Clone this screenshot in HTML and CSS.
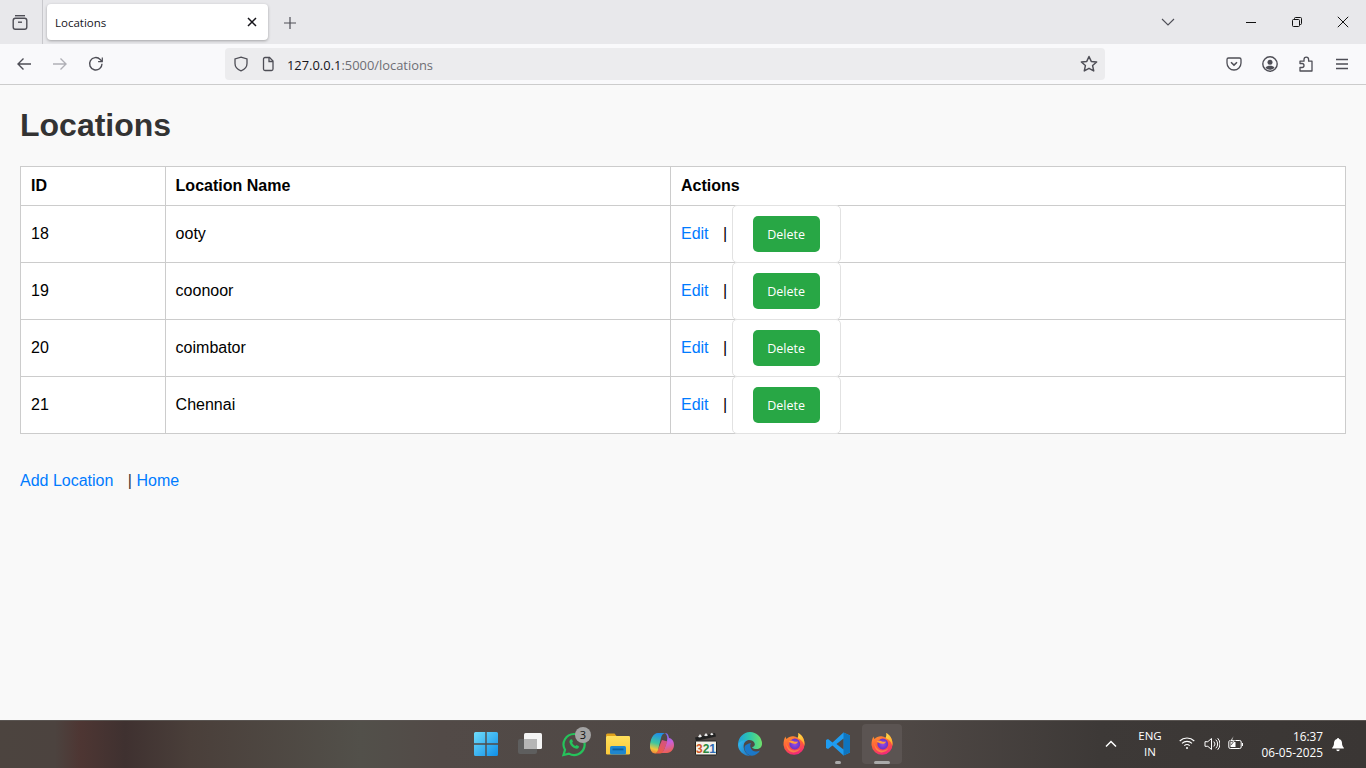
FILE: index.html
```html
<!DOCTYPE html>
<html lang="en">
<head>
<meta charset="utf-8">
<title>Locations</title>
<link rel="stylesheet" href="styles.css">
</head>
<body>
<svg class="defs" width="0" height="0" aria-hidden="true">
  <defs>
    <linearGradient id="winBlue" x1="0" y1="0" x2="1" y2="1"><stop offset="0" stop-color="#6fdcfb"/><stop offset="1" stop-color="#0f8fe8"/></linearGradient>
    <linearGradient id="ffBody" x1="0.3" y1="0" x2="0.6" y2="1"><stop offset="0" stop-color="#ff9a2e"/><stop offset="0.55" stop-color="#ff5a3a"/><stop offset="1" stop-color="#f0267e"/></linearGradient>
    <linearGradient id="ffTail" x1="0" y1="0" x2="0.6" y2="1"><stop offset="0" stop-color="#ffe14a"/><stop offset="1" stop-color="#ffa92e"/></linearGradient>
    <radialGradient id="ffCore" cx="0.5" cy="0.5" r="0.6"><stop offset="0" stop-color="#9b4be8"/><stop offset="1" stop-color="#5a2fc0"/></radialGradient>
    <linearGradient id="edgeA" x1="0" y1="0" x2="1" y2="1"><stop offset="0" stop-color="#35c1f1"/><stop offset="1" stop-color="#1c6fc0"/></linearGradient>
    <linearGradient id="edgeB" x1="0" y1="0.3" x2="1" y2="0.3"><stop offset="0" stop-color="#1f9fe0"/><stop offset="0.5" stop-color="#2fc9a8"/><stop offset="1" stop-color="#6fe06a"/></linearGradient>
    <linearGradient id="copA" x1="0.5" y1="0" x2="0.3" y2="1"><stop offset="0" stop-color="#1f8fe8"/><stop offset="0.5" stop-color="#3fc6a0"/><stop offset="0.8" stop-color="#f2c63a"/><stop offset="1" stop-color="#f0823a"/></linearGradient>
    <linearGradient id="copB" x1="0.4" y1="0" x2="0.6" y2="1"><stop offset="0" stop-color="#6f6ff0"/><stop offset="0.5" stop-color="#c95fd8"/><stop offset="1" stop-color="#f0604a"/></linearGradient>
    <linearGradient id="copC" x1="0.8" y1="0" x2="0.2" y2="1"><stop offset="0" stop-color="#d0508a"/><stop offset="1" stop-color="#f2603a"/></linearGradient>
    <linearGradient id="folder" x1="0" y1="0" x2="0" y2="1"><stop offset="0" stop-color="#ffe05c"/><stop offset="1" stop-color="#fbc93a"/></linearGradient>
    <symbol id="firefox" viewBox="0 0 24 24">
      <path d="M3.400 4.600c.3 1.100.6 1.900 1.200 2.500C6.500 5 9 4 11.500 4.300c1.500.2 3 .7 4 1.700 1.300-2.200 1.100-3.500.7-5 3.300 1.800 6.300 5.500 6.300 10.500a10.500 10.500 0 0 1-21 1.500C1.500 9.800 2 7 3.400 4.600z" fill="url(#ffBody)"/>
      <path d="M16.200 1c3.300 1.800 6.300 5.500 6.300 10.500 0 1-.1 1.800-.3 2.600-.4-3.400-2.400-6.400-6.700-8.100 1.300-2.200 1.100-3.500.7-5z" fill="url(#ffTail)"/>
      <circle cx="12.800" cy="12" r="5.400" fill="url(#ffCore)"/>
      <path d="M6.500 9.200c2-1 3.700-.8 5 0 1.500.9 3 .8 4.500.2-.5 1.600-1.900 2.600-3.600 2.400-2.400-.2-4.300-1-5.900-2.600z" fill="#ff9e3c"/>
      <path d="M4.500 11c.5 4 3.500 7 7.500 7.400 2.500.2 4.800-.6 6.500-2.400-1.500 3-4.300 4.600-7.300 4.400C7 20 4 16 4.500 11z" fill="#ffb03c" opacity=".55"/>
    </symbol>
  </defs>
</svg>

<header class="browser">
  <div class="tabstrip">
    <div class="tabs-toggle">
      <svg class="ico20" viewBox="0 0 20 20" fill="none" stroke="#4e4e56" stroke-width="1.400"><path d="M5 3.700h10"/><rect x="3.200" y="6.200" width="13.600" height="11" rx="2.200"/><path d="M8 10.200h4"/></svg>
    </div>
    <div class="tab">
      <span class="tab-title">Locations</span>
      <svg class="ico12" viewBox="0 0 12 12" fill="none" stroke="#15141a" stroke-width="1.500"><path d="M2 2l8 8M10 2l-8 8"/></svg>
    </div>
    <div class="newtab">
      <svg class="ico16" viewBox="0 0 16 16" fill="none" stroke="#4e4e56" stroke-width="1.200"><path d="M8 2v12M2 8h12"/></svg>
    </div>
    <div class="strip-right">
      <svg class="tablist" viewBox="0 0 14 10" fill="none" stroke="#4e4e56" stroke-width="1.100"><path d="M1 2l6 6 6-6"/></svg>
      <div class="winbtns">
        <svg class="ico12" viewBox="0 0 12 12" fill="none" stroke="#111" stroke-width="1"><path d="M1 6.500h10"/></svg>
        <svg class="ico12" viewBox="0 0 12 12" fill="none" stroke="#111" stroke-width="1"><rect x="1.500" y="3.500" width="7" height="7" rx="1"/><path d="M3.500 3.500V2.500a1 1 0 0 1 1-1h5a1 1 0 0 1 1 1v5a1 1 0 0 1-1 1h-1"/></svg>
        <svg class="ico12" viewBox="0 0 12 12" fill="none" stroke="#111" stroke-width="1"><path d="M.8.800l10.400 10.400M11.200.800L.8 11.200"/></svg>
      </div>
    </div>
  </div>
  <nav class="navbar">
    <div class="nav-left">
      <svg class="ico16" viewBox="0 0 16 16" fill="none" stroke="#4e4e56" stroke-width="1.400"><path d="M15 8H2M7.500 2.500L2 8l5.500 5.500"/></svg>
      <svg class="ico16" viewBox="0 0 16 16" fill="none" stroke="#b0b0b6" stroke-width="1.400"><path d="M1 8h13M8.500 2.500L14 8l-5.500 5.500"/></svg>
      <svg class="ico16" viewBox="0 0 16 16" fill="none" stroke="#4e4e56" stroke-width="1.400"><path d="M14 7.800A6.200 6.200 0 1 1 12.200 3.400L14 5.200"/><path d="M14.300 1.500v4.200h-4.200" stroke-width="1.200"/></svg>
    </div>
    <div class="urlbar">
      <svg class="ico16" viewBox="0 0 16 16" fill="none" stroke="#4e4e56" stroke-width="1.300"><path d="M8 1.200L14 3v4.500c0 3.500-2.500 6-6 7.300-3.500-1.300-6-3.800-6-7.300V3z"/></svg>
      <svg class="ico-page" viewBox="0 0 16 16" fill="none" stroke="#4e4e56" stroke-width="1.300"><path d="M3.500 3a1.500 1.500 0 0 1 1.500-1.500h4.500L13 5v8a1.500 1.500 0 0 1-1.500 1.500H5A1.500 1.500 0 0 1 3.500 13z"/><path d="M9 1.500V5.500h4"/></svg>
      <span class="url"><span class="url-host">127.0.0.1</span>:5000/locations</span>
      <svg class="ico-star" viewBox="0 0 16 16" fill="none" stroke="#4e4e56" stroke-width="1.300"><path d="M8 1.300l2 4.400 4.800.5-3.600 3.200 1 4.800L8 11.800l-4.200 2.400 1-4.800L1.200 6.200 6 5.700z" stroke-linejoin="round"/></svg>
    </div>
    <div class="nav-right">
      <svg class="ico16" viewBox="0 0 16 16" fill="none" stroke="#4e4e56" stroke-width="1.300"><path d="M2.500 2h11A1.500 1.500 0 0 1 15 3.500V7a7 7 0 0 1-14 0V3.500A1.500 1.500 0 0 1 2.500 2z"/><path d="M5 6.300l3 2.800 3-2.800" stroke-width="1.500"/></svg>
      <svg class="ico16" viewBox="0 0 16 16"><circle cx="8" cy="8" r="7.200" fill="none" stroke="#4e4e56" stroke-width="1.400"/><circle cx="8" cy="6.200" r="2.500" fill="#4e4e56"/><path d="M3.500 11.700c1-1.500 2.500-2 4.500-2s3.500.5 4.500 2c-1 1.300-2.600 2-4.500 2s-3.500-.7-4.500-2z" fill="#4e4e56"/></svg>
      <svg class="ico16" viewBox="0 0 16 16" fill="none" stroke="#4e4e56" stroke-width="1.300"><path d="M2 5.200H6V3.400a2.300 2.300 0 0 1 4.600 0V5.200H14V15H2V11.500H4a2 2 0 0 0 0-4H2z" stroke-linejoin="round"/></svg>
      <svg class="ico16" viewBox="0 0 16 16" fill="none" stroke="#4e4e56" stroke-width="1.300"><path d="M2 3.500h12M2 8h12M2 12.500h12"/></svg>
    </div>
  </nav>
</header>

<main class="page">
  <h1 class="title">Locations</h1>
  <table class="grid">
    <thead>
      <tr><th class="col-id">ID</th><th class="col-name">Location Name</th><th>Actions</th></tr>
    </thead>
    <tbody>
      <tr><td>18</td><td>ooty</td><td class="actions"><a class="link edit" href="#">Edit</a> | <form class="del"><button class="del-btn" type="button">Delete</button></form></td></tr>
      <tr><td>19</td><td>coonoor</td><td class="actions"><a class="link edit" href="#">Edit</a> | <form class="del"><button class="del-btn" type="button">Delete</button></form></td></tr>
      <tr><td>20</td><td>coimbator</td><td class="actions"><a class="link edit" href="#">Edit</a> | <form class="del"><button class="del-btn" type="button">Delete</button></form></td></tr>
      <tr><td>21</td><td>Chennai</td><td class="actions"><a class="link edit" href="#">Edit</a> | <form class="del"><button class="del-btn" type="button">Delete</button></form></td></tr>
    </tbody>
  </table>
  <p class="bottom-links"><a class="link edit" href="#">Add Location</a> | <a class="link" href="#">Home</a></p>
</main>

<footer class="taskbar">
  <div class="task-icons">
    <div class="task"><svg class="ico24" viewBox="0 0 24 24"><path d="M0 1.500A1.500 1.500 0 0 1 1.500 0h9.800v11.300H0zM12.700 0h9.800A1.500 1.500 0 0 1 24 1.500v9.800H12.700zM0 12.700h11.300V24H1.500A1.500 1.500 0 0 1 0 22.500zM12.700 12.700H24v9.800a1.500 1.500 0 0 1-1.500 1.500h-9.800z" fill="url(#winBlue)"/></svg></div>
    <div class="task"><svg class="ico24" viewBox="0 0 24 24"><rect x="0" y="7" width="19" height="15" rx="2" fill="#5e5e5e"/><rect x="6" y="1" width="18" height="16" rx="1.500" fill="#f4f4f4"/><rect x="6" y="7" width="13" height="10" fill="#b5b5b5"/></svg></div>
    <div class="task"><svg class="ico24-wa" viewBox="0 0 26 26"><path d="M13 3a10.500 10.500 0 0 0-9 15.800L2.500 24l5.400-1.400A10.500 10.500 0 1 0 13 3z" fill="none" stroke="#25c35b" stroke-width="2.200"/><path d="M9.500 8.500c-1 .8-1.300 2-.8 3.500 1 2.700 3.200 4.700 5.800 5.600 1.400.4 2.600 0 3.300-1.200l.2-1.200-2.500-1.300-1 1.200c-1.500-.6-2.700-1.800-3.400-3.300l.9-1-1-2.600z" fill="#25c35b"/></svg><span class="badge">3</span></div>
    <div class="task"><svg class="ico24" viewBox="0 0 24 24"><path d="M0 3a1.500 1.500 0 0 1 1.500-1.500h7L11 4.500h-11z" fill="#e0a21c"/><rect x="0" y="4" width="24" height="18.500" rx="1.200" fill="url(#folder)"/><rect x="4" y="14" width="16" height="8.500" rx="1.500" fill="#1f87cf"/><rect x="6.500" y="16.500" width="11" height="1.800" fill="#0d5f9f"/></svg></div>
    <div class="task"><svg class="ico24" viewBox="0 0 24 24"><path d="M15 1c2 0 3 1 3.500 3l.5 2c3 .5 5 3 5 7 0 4-3 8-7 8h-6c2-1 3-3 4-6l2-6c.7-3 .5-6-2-8z" fill="url(#copB)"/><path d="M12 8l5.500 1.500-3.500 8.500c-1 2-2 3.500-4 3.500H5c1.500-.5 2.500-2 3-4z" fill="url(#copC)"/><path d="M8 1h7c-2.200.6-3.400 2.500-4 5l-3 12c-.4 1.500-1.500 3.500-3 3.500-2.500 0-5-2.800-5-7C0 8 3 1 8 1z" fill="url(#copA)"/></svg></div>
    <div class="task"><svg class="ico24" viewBox="0 0 24 24"><path d="M1 5.500L21 1l1 3.500-20 4.500z" fill="#222"/><path d="M4 5l2-3 2 2.500-2 1zM10 3.500l2-2.500 2 2.500-2 .8zM16 2.200l2-1.500 1.500 2-2 .5z" fill="#eee"/><rect x="1.500" y="9" width="21" height="14" rx="1" fill="#f4f1e8" stroke="#222"/><text x="12" y="21" class="mpc-text"><tspan fill="#d2572a">3</tspan><tspan fill="#2b8a3e">2</tspan><tspan fill="#2f6bb5">1</tspan></text></svg></div>
    <div class="task"><svg class="ico24" viewBox="0 0 24 24"><path d="M12 0a12 12 0 0 1 12 12c0 3-2.500 5-5.500 5-2.500 0-4-.7-4.500-1.800 2-.5 3-1.700 2.800-3.200C16.300 9.500 14 8 11 8 6.500 8 2.500 10 0 13 0 5.500 5.500 0 12 0z" fill="url(#edgeB)"/><path d="M0 13c.5-3 5-5.500 10-5-4 1.500-5 5-4 9 .7 3 3 5.500 6.500 7C5.500 24 .2 19 0 13z" fill="url(#edgeA)"/><path d="M6.500 15c-.5 4 3 8.500 7.500 8.800 3.500-.4 6.500-2.500 8-5.300-4 2-8.500 1-9.500-3.200-.5-1.500-.2-3 .5-4.300-3 .6-6 2-6.500 4z" fill="#1c78c8"/></svg></div>
    <div class="task"><svg class="ico24" viewBox="0 0 24 24"><use href="#firefox"/></svg></div>
    <div class="task"><svg class="ico24" viewBox="0 0 24 24"><path d="M17.500.5L24 3.500v17l-6.500 3L6.500 13.500l-4.500 3.500L0 16V8l2-1 4.500 3.500z" fill="#1f9cf0"/><path d="M17.500.5L24 3.500v17l-6.500 3z" fill="#0e75bf"/><path d="M17.500 6.500L10.500 12l7 5.500z" fill="#4e4845"/></svg><span class="dot"></span></div>
    <div class="task task-active"><svg class="ico24" viewBox="0 0 24 24"><use href="#firefox"/></svg><span class="dot dot-wide"></span></div>
  </div>
  <div class="tray">
    <svg class="tray-chev" viewBox="0 0 12 8" fill="none" stroke="#fff" stroke-width="1.500"><path d="M1 6.500L6 1.500l5 5"/></svg>
    <div class="lang"><span>ENG</span><span>IN</span></div>
    <div class="tray-status">
      <svg class="ico16" viewBox="0 0 16 16" fill="none" stroke="#fff" stroke-width="1.100"><path d="M.7 5a10.500 10.500 0 0 1 14.600 0M3 7.400a7.200 7.200 0 0 1 10 0M5.300 9.700a4 4 0 0 1 5.400 0"/><circle cx="8" cy="12" r="1" fill="#fff" stroke="none"/></svg>
      <svg class="ico16" viewBox="0 0 16 16" fill="none" stroke="#fff" stroke-width="1"><path d="M1 5.700h2.800L7.500 2.500v11L3.800 10.300H1z" stroke-linejoin="round"/><path d="M9.800 5.500a3.500 3.500 0 0 1 0 5M11.800 3.700a6 6 0 0 1 0 8.600M13.700 2.200a8.500 8.500 0 0 1 0 11.600"/></svg>
      <svg class="ico16" viewBox="0 0 16 16" fill="none" stroke="#fff" stroke-width="1"><rect x=".8" y="4.500" width="12.400" height="8" rx="1.500"/><path d="M14.500 7v3"/><path d="M2.500 6h5v5h-5z" fill="#fff" stroke="none"/><path d="M5.500 0L1.800 5.500h3L3.200 9l4.300-5H4.500z" fill="#fff" stroke="#3c3836" stroke-width=".5"/></svg>
    </div>
    <div class="clock"><span>16:37</span><span>06-05-2025</span></div>
    <svg class="bell" viewBox="0 0 14 14" fill="#fff"><path d="M7 .5c.6 0 1 .4 1 .9 2 .5 3 2.200 3 4.100 0 2 .5 3.300 1.800 4.700.3.400.1.800-.4.800H1.600c-.5 0-.7-.4-.4-.8C2.500 8.800 3 7.500 3 5.500c0-1.900 1-3.600 3-4.100 0-.5.400-.9 1-.9z"/><path d="M5.300 12h3.400a1.700 1.700 0 0 1-3.400 0z"/></svg>
  </div>
</footer>
</body>
</html>
```

FILE: styles.css
```css
* { box-sizing: border-box; }
html, body { margin: 0; height: 100%; }
body {
  display: flex;
  flex-direction: column;
  height: 768px;
  overflow: hidden;
  background: #f9f9f9;
  font-family: "Liberation Sans", Arial, sans-serif;
  font-size: 16px;
}
svg { display: block; flex: none; }
.defs { position: absolute; }
.ico12 { width: 12px; height: 12px; }
.ico14 { width: 14px; height: 14px; }
.ico16 { width: 16px; height: 16px; }
.ico20 { width: 20px; height: 20px; }
.ico24 { width: 24px; height: 24px; }
.ico24-wa { width: 26px; height: 26px; }

/* browser chrome */
.browser { flex: none; font-family: "Open Sans", "Noto Sans", sans-serif; }
.tabstrip {
  height: 44px;
  display: flex;
  align-items: center;
  background: #e8e8eb;
}
.tabs-toggle {
  width: 43px;
  height: 44px;
  padding-left: 10px;
  display: flex;
  align-items: center;
  border-right: 1px solid #c8c8cc;
}
.tab {
  width: 221px;
  height: 36px;
  margin-left: 4px;
  padding: 0 10px 0 8px;
  display: flex;
  align-items: center;
  justify-content: space-between;
  background: #fff;
  border-radius: 4px;
  box-shadow: 0 1px 3px rgba(0, 0, 0, .3);
}
.tab-title { font-size: 11.5px; color: #15141a; }
.newtab { margin-left: 14px; padding-top: 1px; }
.strip-right { margin-left: auto; display: flex; align-items: center; }
.tablist { width: 14px; height: 10px; margin-right: 70px; }
.winbtns { display: flex; align-items: center; gap: 34px; padding-right: 17px; }
.navbar {
  height: 41px;
  display: flex;
  align-items: center;
  background: #f9f9fb;
  border-bottom: 1px solid #ccc;
}
.nav-left { width: 225px; padding-left: 16px; display: flex; gap: 20px; }
.urlbar {
  width: 880px;
  height: 32px;
  margin-bottom: 1px;
  padding: 0 7px 0 8px;
  display: flex;
  align-items: center;
  background: #ececee;
  border-radius: 4px;
}
.ico-page { width: 16px; height: 16px; margin-left: 11px; }
.url { margin-left: 11px; padding-top: 2px; font-size: 12.9px; color: #6e6e75; }
.url-host { color: #15141a; }
.ico-star { width: 18px; height: 18px; margin-left: auto; }
.nav-right { margin-left: 121px; display: flex; gap: 20px; }

/* page */
.page { flex: 1; padding: 20px; }
.title { margin: 2px 0 22px; font-size: 32px; line-height: 37px; font-weight: 700; color: #333; }
.grid { width: 100%; border-collapse: collapse; background: #fff; color: #000; table-layout: fixed; }
.grid th, .grid td { border: 1px solid #ccc; padding: 10px; text-align: left; }
.grid th { line-height: 18px; }
.col-id { width: 144.6px; }
.col-name { width: 505.4px; }
.grid td.actions { padding-top: 0; padding-bottom: 0; }
.link { color: #007bff; text-decoration: none; }
.edit { margin-right: 10px; }
.del {
  position: relative;
  z-index: 1;
  display: inline-block;
  margin: -1px 0;
  padding: 10px 20px;
  background: #fff;
  border: 1px solid #e2e2e2;
  border-radius: 5px;
}
.del-btn {
  display: block;
  width: 67px;
  height: 36px;
  padding: 0;
  border: 0;
  border-radius: 5px;
  background: #28a745;
  color: #fff;
  font-family: "Open Sans", "Noto Sans", sans-serif;
  font-size: 12.500px;
}
.bottom-links { margin: 38px 0 0; color: #333; }

/* taskbar */
.taskbar {
  flex: none;
  height: 48px;
  display: flex;
  align-items: center;
  box-shadow: inset 0 1px 0 #5a5552;
  color: #fff;
  font-family: "Open Sans", "Noto Sans", sans-serif;
  background: linear-gradient(90deg, #4c443f 0, #4c433f 55px, #4e3633 80px, #3f3130 125px, #4a3f3a 190px, #52504a 360px, #524a47 440px, #4f4845 700px, #4f4845 900px, #3d3937 1100px, #3a3634 1366px);
}
.task-icons { margin-left: 466px; display: flex; gap: 4px; }
.task {
  position: relative;
  width: 40px;
  height: 40px;
  display: flex;
  align-items: center;
  justify-content: center;
  border-radius: 4px;
}
.task-active { background: rgba(255, 255, 255, .07); }
.badge {
  position: absolute;
  top: 3px;
  right: 3px;
  width: 16px;
  height: 16px;
  border-radius: 50%;
  background: #a3a3a3;
  color: #111;
  font-size: 11px;
  line-height: 16px;
  text-align: center;
}
.dot {
  position: absolute;
  bottom: 0;
  left: 17px;
  width: 6px;
  height: 3px;
  border-radius: 2px;
  background: #aaa;
}
.dot-wide { left: 12px; width: 16px; }
.mpc-text { font-family: "Liberation Sans", sans-serif; font-size: 12px; font-weight: 700; text-anchor: middle; }
.tray { margin-left: auto; display: flex; align-items: center; padding-right: 21px; }
.tray-chev { width: 12px; height: 8px; margin-right: 14px; }
.lang { width: 38px; display: flex; flex-direction: column; align-items: center; font-size: 11.5px; line-height: 16px; }
.tray-status { margin-left: 10px; display: flex; gap: 8.5px; }
.clock { margin-left: 7px; width: 72px; display: flex; flex-direction: column; align-items: flex-end; font-size: 11.8px; line-height: 16px; }
.bell { width: 14px; height: 15px; margin-left: 8px; }
```
